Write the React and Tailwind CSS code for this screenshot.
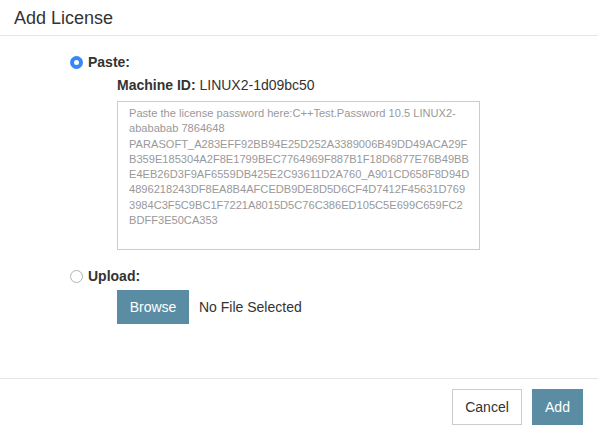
const lines = [
  "Paste the license password here:C++Test.Password 10.5 LINUX2-",
  "abababab 7864648",
  "PARASOFT_A283EFF92BB94E25D252A3389006B49DD49ACA29F",
  "B359E185304A2F8E1799BEC7764969F887B1F18D6877E76B49BB",
  "E4EB26D3F9AF6559DB425E2C93611D2A760_A901CD658F8D94D",
  "4896218243DF8EA8B4AFCEDB9DE8D5D6CF4D7412F45631D769",
  "3984C3F5C9BC1F7221A8015D5C76C386ED105C5E699C659FC2",
  "BDFF3E50CA353",
];

const Radio = ({ checked }) =>
  checked ? (
    <span className="w-[13px] h-[13px] rounded-full bg-[#3a86f7] flex items-center justify-center shrink-0">
      <span className="w-[5px] h-[5px] rounded-full bg-white"></span>
    </span>
  ) : (
    <span className="w-[13px] h-[13px] rounded-full border border-[#b3b3b3] bg-white shrink-0"></span>
  );

const App = () => {
  return (
    <div
      className="w-[598px] h-[434px] bg-white flex flex-col text-[#333]"
      style={{ fontFamily: '"Liberation Sans", Arial, sans-serif' }}
    >
      <header className="h-[36px] border-b border-[#e5e5e5] px-[14px] flex items-center">
        <h1 className="text-[18px] leading-none text-[#333]">Add License</h1>
      </header>

      <div className="flex-1 pl-[70px] pt-[18px]">
        <div className="flex items-center gap-[5px] h-[16px]">
          <Radio checked />
          <span className="text-[14px] font-bold">Paste:</span>
        </div>
        <div className="pl-[47px] mt-[7px] text-[14px] h-[16px] leading-[16px]">
          <span className="font-bold">Machine ID:</span> LINUX2-1d09bc50
        </div>
        <div className="ml-[47px] mt-[8px] w-[363px] h-[149px] border border-[#cccccc] px-[11px] pt-[4px] text-[11.1px] leading-[15.3px] text-[#999]">
          {lines.map((l) => (
            <div key={l} className="whitespace-nowrap">{l}</div>
          ))}
        </div>
        <div className="flex items-center gap-[5px] h-[16px] mt-[18px]">
          <Radio />
          <span className="text-[14px] font-bold">Upload:</span>
        </div>
        <div className="pl-[47px] mt-[6px] flex items-center gap-[10px]">
          <button className="w-[72px] h-[34px] bg-[#5a8ca4] text-white text-[14px]">Browse</button>
          <span className="text-[14px]">No File Selected</span>
        </div>
      </div>

      <footer className="border-t border-[#e5e5e5] h-[56px] pt-[10px] pr-[15px] flex justify-end items-start gap-[10px]">
        <button className="w-[70px] h-[36px] border border-[#cccccc] bg-white text-[14px] text-[#333]">Cancel</button>
        <button className="w-[51px] h-[36px] bg-[#5a8ca4] text-white text-[14px]">Add</button>
      </footer>
    </div>
  );
};

export default App;
